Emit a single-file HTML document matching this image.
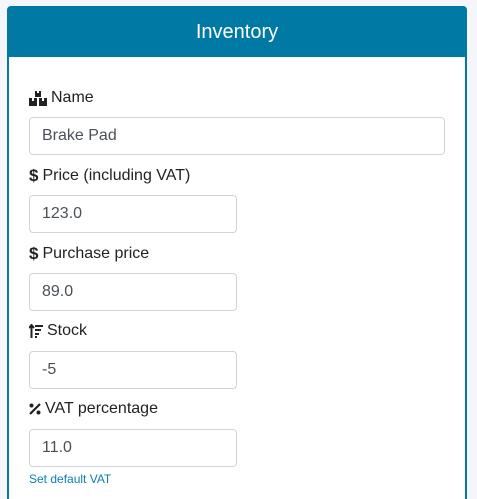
<!DOCTYPE html>
<html style="overflow:hidden"><head><style>
body{margin:0;background:#f4f6fb;font-family:"Liberation Sans",sans-serif;width:477px;height:499px;overflow:hidden;position:relative}
.card{position:absolute;left:7px;top:6px;width:456px;height:491px;border:2px solid #0079a5;border-bottom:none;border-radius:4px 4px 0 0;background:#fff}
.hd{position:absolute;left:0;top:0;right:0;height:49px;background:#0079a5;color:#fff;font-size:20px;text-align:center;line-height:49px}
.lb{position:absolute;left:29px;font-size:16px;color:#222;display:flex;align-items:center;gap:4px}
.in{position:absolute;left:29px;width:194px;height:36px;border:1px solid #ced4da;border-radius:4px;background:#fff;color:#495057;font-size:16px;line-height:36px;padding-left:12px;box-sizing:content-box}
.lk{position:absolute;left:29px;top:472px;font-size:12px;color:#0a7fae}
</style></head><body>
<div class="card"><div class="hd">Inventory</div></div>
<div class="lb" style="top:89px"><svg width="18" height="16" viewBox="0 0 18 16"><rect x="6" y="1" width="6" height="6" fill="#222"/><rect x="0" y="8" width="8" height="8" fill="#222"/><rect x="10" y="8" width="8" height="8" fill="#222"/><rect x="3" y="8" width="2" height="3" fill="#fff"/><rect x="13" y="8" width="2" height="3" fill="#fff"/><rect x="8" y="1" width="2" height="2" fill="#fff"/></svg>Name</div>
<div class="in" style="top:117px;width:402px">Brake Pad</div>
<div class="lb" style="top:166px"><b style="font-size:17px">$</b>Price (including VAT)</div>
<div class="in" style="top:195px">123.0</div>
<div class="lb" style="top:244px"><b style="font-size:17px">$</b>Purchase price</div>
<div class="in" style="top:273px">89.0</div>
<div class="lb" style="top:322px"><svg width="14" height="14" viewBox="0 0 14 14"><path d="M2.5 14V2M0 4l2.5-3L5 4" stroke="#222" stroke-width="2" fill="none"/><rect x="6" y="1" width="8" height="2" fill="#222"/><rect x="6" y="5" width="6" height="2" fill="#222"/><rect x="6" y="9" width="4" height="2" fill="#222"/><rect x="6" y="12" width="2" height="2" fill="#222"/></svg>Stock</div>
<div class="in" style="top:351px">-5</div>
<div class="lb" style="top:400px"><svg width="12" height="12" viewBox="0 0 12 12"><path d="M11 1L1 11" stroke="#222" stroke-width="2.2"/><circle cx="2.5" cy="2.5" r="2" fill="#222"/><circle cx="9.5" cy="9.5" r="2" fill="#222"/></svg>VAT percentage</div>
<div class="in" style="top:429px">11.0</div>
<div class="lk">Set default VAT</div>
</body></html>
